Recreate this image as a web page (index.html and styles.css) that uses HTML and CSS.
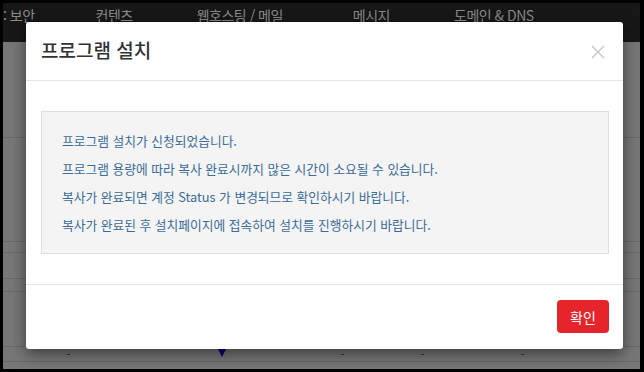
FILE: index.html
```html
<!DOCTYPE html>
<html lang="ko">
<head>
    <meta charset="UTF-8">
    <meta name="viewport" content="width=device-width, initial-scale=1.0">
    <title>프로그램 설치</title>
    <link rel="stylesheet" href="styles.css">
</head>
<body>
    <div class="screen">
        <nav class="topnav">
            <span class="nav-item first">: 보안</span>
            <span class="nav-item">컨텐츠</span>
            <span class="nav-item">웹호스팅 / 메일</span>
            <span class="nav-item">메시지</span>
            <span class="nav-item">도메인 &amp; DNS</span>
        </nav>
        <div class="bg">
            <div class="row r1"></div>
            <div class="row r2"></div>
            <div class="row r3"></div>
            <div class="row r4"></div>
            <div class="row r5"></div>
            <div class="row r6"></div>
            <div class="row r7">
                <span class="dot" style="left: 64px"></span>
                <span class="pin" style="left: 215px"></span>
                <span class="dot" style="left: 338px"></span>
                <span class="dot" style="left: 418px"></span>
                <span class="dot" style="left: 518px"></span>
            </div>
        </div>

        <div class="modal">
            <div class="modal-header">
                <h4 class="modal-title">프로그램 설치</h4>
                <span class="close">
                    <svg width="14" height="14" viewBox="0 0 14 14">
                        <path d="M1 1 L13 13 M13 1 L1 13" stroke="#c4c4c4" stroke-width="1.4" fill="none"/>
                    </svg>
                </span>
            </div>
            <div class="modal-body">
                <div class="info-box">
                    <p>프로그램 설치가 신청되었습니다.</p>
                    <p>프로그램 용량에 따라 복사 완료시까지 많은 시간이 소요될 수 있습니다.</p>
                    <p>복사가 완료되면 계정 Status 가 변경되므로 확인하시기 바랍니다.</p>
                    <p>복사가 완료된 후 설치페이지에 접속하여 설치를 진행하시기 바랍니다.</p>
                </div>
            </div>
            <div class="modal-footer">
                <button class="btn-ok">확인</button>
            </div>
        </div>
    </div>
</body>
</html>
```

FILE: styles.css
```css
body {
    margin: 0;
    background-color: #000;
    font-family: "Noto Sans CJK KR", "Noto Sans", sans-serif;
}
.screen {
    position: relative;
    height: 366px;
    margin: 3px 4px 3px 3px;
    background-color: #777;
    overflow: hidden;
}
.topnav {
    display: flex;
    height: 39px;
    background-color: #171717;
    color: #8a8a8a;
    font-size: 14px;
    letter-spacing: -0.5px;
    line-height: 24px;
    white-space: nowrap;
}
.nav-item {
    margin-left: 64px;
}
.nav-item.first {
    margin-left: 0;
}
.nav-item:nth-child(2) {
    margin-left: 61px;
}
.nav-item:nth-child(4) {
    margin-left: 70px;
}
.row {
    position: relative;
    border-bottom: 1px solid #686868;
}
.r1 { height: 95px; }
.r2 { height: 103px; }
.r3 { height: 10px; }
.r4 { height: 25px; }
.r5 { height: 12px; }
.r6 { height: 54px; }
.r7 { height: 14px; }
.pin {
    position: absolute;
    top: 2px;
    width: 0;
    height: 0;
    border-left: 4px solid transparent;
    border-right: 4px solid transparent;
    border-top: 8px solid #000070;
}
.dot {
    position: absolute;
    top: 7px;
    width: 3px;
    height: 1px;
    background-color: #2a2a7a;
}
.modal {
    position: absolute;
    left: 23px;
    top: 19px;
    width: 597px;
    height: 327px;
    background-color: #fff;
    border-radius: 3px;
    box-shadow: 0 5px 15px rgba(0, 0, 0, 0.5);
    display: flex;
    flex-direction: column;
}
.modal-header {
    display: flex;
    justify-content: space-between;
    align-items: center;
    height: 58px;
    padding: 0 18px 0 15px;
    border-bottom: 1px solid #e5e5e5;
}
.modal-title {
    margin: -4px 0 0 0;
    font-size: 19px;
    font-weight: 500;
    color: #333;
}
.close {
    display: flex;
    margin-top: 2px;
}
.modal-body {
    padding: 30px 14px 30px 15px;
}
.info-box {
    background-color: #f4f4f4;
    border: 1px solid #e0e0e0;
    padding: 15px 20px 14px;
    color: #3a6c97;
    font-size: 12.75px;
    line-height: 28px;
}
.info-box p {
    margin: 0;
}
.modal-footer {
    flex: 1;
    display: flex;
    justify-content: flex-end;
    align-items: flex-start;
    padding: 15px 14px 0 0;
    border-top: 1px solid #e5e5e5;
}
.btn-ok {
    width: 52px;
    height: 33px;
    border: none;
    border-radius: 4px;
    background-color: #e5242b;
    color: #fff;
    font-family: "Noto Sans CJK KR", sans-serif;
    font-size: 14px;
    padding: 0;
}
```
